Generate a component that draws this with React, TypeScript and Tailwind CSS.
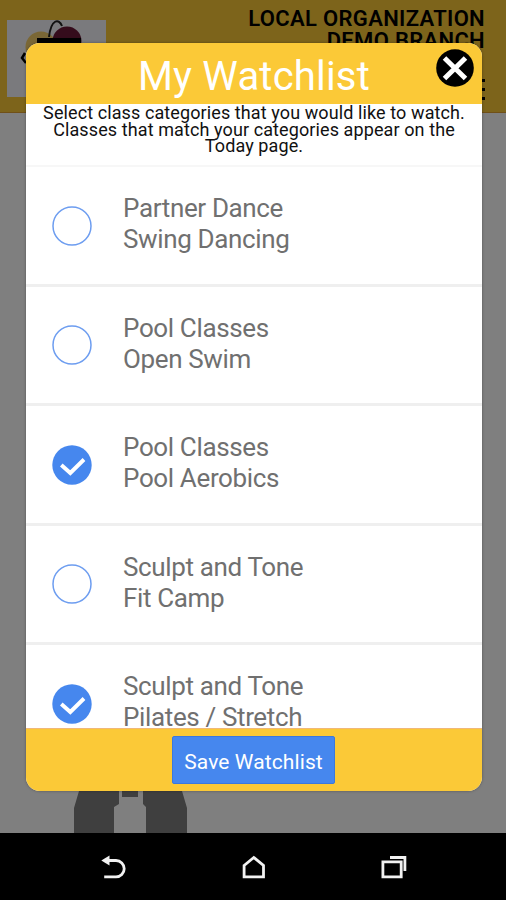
import { useState } from 'react';

interface WatchItem {
  id: number;
  category: string;
  name: string;
}

const ITEMS: WatchItem[] = [
  { id: 1, category: 'Partner Dance', name: 'Swing Dancing' },
  { id: 2, category: 'Pool Classes', name: 'Open Swim' },
  { id: 3, category: 'Pool Classes', name: 'Pool Aerobics' },
  { id: 4, category: 'Sculpt and Tone', name: 'Fit Camp' },
  { id: 5, category: 'Sculpt and Tone', name: 'Pilates / Stretch' },
];

function Logo() {
  return (
    <svg width="99" height="77" viewBox="0 0 99 77" className="mt-5 ml-[7px] bg-[#f4f4fa]">
      <circle cx="34" cy="27" r="15.500" fill="#f5cf6c" />
      <circle cx="60" cy="21" r="14.500" fill="#6b1838" />
      <path d="M42 17C44 -1 52-2 55 6" fill="none" stroke="#222" strokeWidth="2" />
      <path d="M30 18h44v5H30z" fill="#000" />
      <path d="M18 33l-3 5l4 5" fill="none" stroke="#000" strokeWidth="2.500" />
    </svg>
  );
}

function Binoculars() {
  return (
    <svg width="114" height="48" viewBox="0 0 114 48" className="ml-[74px]" fill="#7e7e7e">
      <path d="M5 0H45V19L40 22V48H0V23L5 6z" />
      <path d="M48 0H64V12H48z" />
      <path d="M69 0H108V6L113 23V48H72V22L69 19z" />
    </svg>
  );
}

function CheckCircle({ checked }: { checked: boolean }) {
  return (
    <svg width="40" height="40" viewBox="0 0 40 40" className="shrink-0">
      {checked ? (
        <>
          <circle cx="20" cy="20" r="19.700" fill="#4687ee" />
          <path d="M9.300 20L18.300 28L32 14.500" fill="none" stroke="#fff" strokeWidth="3.900" />
        </>
      ) : (
        <circle cx="20" cy="20" r="19" fill="#fff" stroke="#6d9df0" strokeWidth="1.500" />
      )}
    </svg>
  );
}

function NavBar() {
  return (
    <nav className="relative flex h-[67px] items-center justify-between bg-black pr-[99px] pl-[101px]">
      <svg width="26" height="26" viewBox="0 0 26 26" fill="none" stroke="#f2f2f2" strokeWidth="2.800">
        <path d="M6 6.500H15A8.200 8.200 0 0 1 15 22.900H3.200" />
        <path d="M0.300 6.500L8.500 1.500V11.500z" fill="#f2f2f2" stroke="none" />
      </svg>
      <svg width="24" height="26" viewBox="0 0 24 26" fill="none" stroke="#f2f2f2" strokeWidth="2.800">
        <path d="M2.100 11.500L11.800 3.500L21.500 11.500V22.800H2.100z" />
      </svg>
      <svg width="26" height="26" viewBox="0 0 26 26" fill="none" stroke="#f2f2f2" strokeWidth="2.800">
        <path d="M1.900 7.800H20.200V22.800H1.900z" />
        <path d="M9 3.500H23.900V17" />
      </svg>
    </nav>
  );
}

export default function App() {
  const [selected, setSelected] = useState<number[]>([3, 5]);

  const toggle = (id: number) => {
    setSelected(prev => (prev.includes(id) ? prev.filter(i => i !== id) : [...prev, id]));
  };

  return (
    <div className="relative flex h-[900px] w-[506px] flex-col overflow-hidden bg-white font-['Roboto',sans-serif]">
      <header className="flex h-[113px] shrink-0 items-start justify-between border-b border-[#e0a030] bg-[#fbc937]">
        <Logo />
        <div className="flex flex-col items-end pt-2 pr-[21px] text-right text-[22px] leading-[22px] font-semibold text-black">
          <span className="tracking-[0.320px]">LOCAL ORGANIZATION</span>
          <span className="tracking-[0.320px]">DEMO BRANCH</span>
          <svg width="3" height="24" viewBox="0 0 3 24" className="mt-[27px]" fill="#000">
            <path d="M0 0h3v3H0zM0 9h3v3H0zM0 18h3v3H0z" />
          </svg>
        </div>
      </header>
      <main className="flex flex-1 flex-col justify-end">
        <Binoculars />
      </main>
      <NavBar />

      <div className="absolute inset-x-0 top-0 h-[833px] bg-black/50 pt-[43px] pl-[26px]">
        <section className="relative flex h-[748px] w-[456px] flex-col overflow-hidden rounded-[14px] bg-white shadow-[0_0_3px_rgba(0,0,0,0.35)]">
          <div className="flex h-[61px] shrink-0 items-center justify-center bg-[#fbc937]">
            <h1 className="pt-[7px] text-[40px] leading-none tracking-[0.2px] text-white">My Watchlist</h1>
            <button className="absolute top-[6px] right-[8px]" aria-label="Close">
              <svg width="38" height="38" viewBox="0 0 38 38">
                <circle cx="19" cy="19" r="18.800" fill="#000" />
                <path d="M8.500 9L29.500 29.500M29.500 9L8.500 29.500" stroke="#fff" strokeWidth="5" />
              </svg>
            </button>
          </div>

          <p className="h-[61px] shrink-0 pt-px text-center text-[18px] leading-[16.700px] tracking-[0.100px] whitespace-nowrap text-[#111]">
            Select class categories that you would like to watch.
            <br />
            Classes that match your categories appear on the
            <br />
            Today page.
          </p>

          <ul className="min-h-0 flex-1 overflow-hidden border-t-2 border-[#f7f7f7]">
            {ITEMS.map(item => (
              <li
                key={item.id}
                onClick={() => toggle(item.id)}
                className="flex h-[119.500px] items-center gap-[31px] border-b-[3px] border-[#efefef] pt-px pl-[26px]"
              >
                <CheckCircle checked={selected.includes(item.id)} />
                <div className="pb-[3px] text-[26px] leading-[31px] tracking-[-0.360px] text-[#707070]">
                  <div>{item.category}</div>
                  <div>{item.name}</div>
                </div>
              </li>
            ))}
          </ul>

          <div className="flex h-[63px] shrink-0 items-center justify-center border-t border-[#f0b878] bg-[#fbc937]">
            <button className="mr-px h-12 w-[163px] rounded-[2px] border border-[#3b78dd] bg-[#4687ee] pt-1.5 text-[21px] tracking-[0.100px] text-white">
              Save Watchlist
            </button>
          </div>
        </section>
      </div>
    </div>
  );
}
